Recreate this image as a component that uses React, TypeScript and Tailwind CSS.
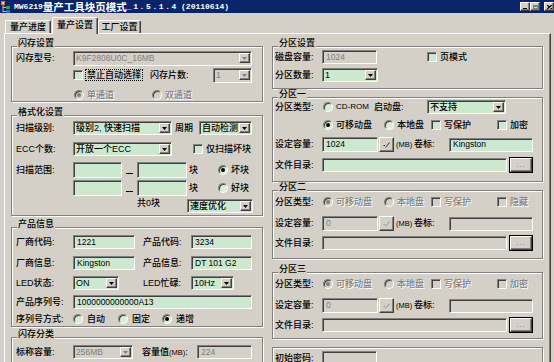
import React from "react";

const sunken =
  "border border-t-[#808080] border-l-[#808080] border-r-white border-b-white shadow-[inset_1px_1px_0_#404040]";
const raised =
  "border border-t-white border-l-white border-r-[#404040] border-b-[#404040] shadow-[inset_-1px_-1px_0_#808080]";
const dis = "text-[#808080] [text-shadow:1px_1px_0_#fff]";

function Field({ className = "", value = "", disabled = false }: { className?: string; value?: string; disabled?: boolean }) {
  return (
    <div
      className={`${className} shrink-0 box-border ${sunken} flex items-center pl-[3px] overflow-hidden whitespace-nowrap text-[8.5px] ${
        disabled ? "bg-[#d4d0c8] text-[#808080]" : "bg-[#cce8cf] text-black"
      }`}
    >
      {value}
    </div>
  );
}

function Arrow({ disabled = false }: { disabled?: boolean }) {
  return (
    <div className={`w-[11px] h-[10px] shrink-0 mr-[1px] box-border bg-[#d4d0c8] ${raised} flex items-center justify-center`}>
      <svg width="5" height="3" viewBox="0 0 5 3">
        <path d="M0 0h5L2.5 3z" fill={disabled ? "#808080" : "#000"} />
      </svg>
    </div>
  );
}

function Combo({ className = "", value = "", disabled = false }: { className?: string; value?: string; disabled?: boolean }) {
  return (
    <div
      className={`${className} shrink-0 box-border ${sunken} flex items-center justify-between overflow-hidden whitespace-nowrap ${
        disabled ? "bg-[#d4d0c8] text-[#808080]" : "bg-[#cce8cf] text-black"
      }`}
    >
      <span className={`pl-[2px] ${disabled ? "text-[8.5px]" : ""}`}>{value}</span>
      <Arrow disabled={disabled} />
    </div>
  );
}

function Check({ disabled = false }: { disabled?: boolean }) {
  return <span className={`block w-[10px] h-[10px] shrink-0 box-border ${sunken} ${disabled ? "bg-[#d4d0c8]" : "bg-[#cce8cf]"}`} />;
}

function Radio({ checked = false, disabled = false }: { checked?: boolean; disabled?: boolean }) {
  return (
    <span
      className={`w-[10px] h-[10px] shrink-0 box-border rounded-full ${sunken} flex items-center justify-center ${
        disabled ? "bg-[#d4d0c8]" : "bg-[#d8eed8]"
      }`}
    >
      {checked && <span className={`block w-[4px] h-[4px] rounded-full ${disabled ? "bg-[#808080]" : "bg-black"}`} />}
    </span>
  );
}

function Group({ title, className = "", children }: { title?: string; className?: string; children?: React.ReactNode }) {
  return (
    <div className={`relative shrink-0 box-border border border-[#808080] shadow-[inset_1px_1px_0_#fff,1px_1px_0_#fff] ${className}`}>
      {title && <span className="absolute -top-[9px] left-[5px] px-[1px] bg-[#d4d0c8] leading-[11px]">{title}</span>}
      {children}
    </div>
  );
}

function CheckBtn({ disabled = false }: { disabled?: boolean }) {
  return (
    <div className={`w-[15px] h-[15px] ml-[1px] shrink-0 box-border bg-[#d4d0c8] ${raised} flex items-center justify-center`}>
      <svg width="7" height="6" viewBox="0 0 7 6">
        <path d="M0.5 3.5L2 3.5M2.5 5.5L6.5 0.5" stroke={disabled ? "#909090" : "#303030"} strokeWidth="1" fill="none" />
      </svg>
    </div>
  );
}

function DotsBtn() {
  return (
    <div className="w-[24px] h-[16px] ml-[2px] shrink-0 box-border border border-black bg-[#d4d0c8]">
      <div className={`w-full h-full box-border ${raised} flex items-center justify-center text-[#808080] text-[8px] tracking-[1px]`}>...</div>
    </div>
  );
}

function Partition({ title, last, className, disabledAll }: { title: string; last: string; className: string; disabledAll: boolean }) {
  return (
    <Group title={title} className={className}>
      <div className="flex flex-col pl-[2px] pt-[4px]">
        <div className="h-[14px] flex items-center">
          <span className="w-[48px] shrink-0">分区类型:</span>
          <div className="w-[61px] flex items-center">
            <Radio checked disabled={disabledAll} />
            <span className={`ml-[3px] ${dis}`}>可移动盘</span>
          </div>
          <div className="w-[47px] flex items-center">
            <Radio disabled={disabledAll} />
            <span className={`ml-[3px] ${dis}`}>本地盘</span>
          </div>
          <div className="w-[66px] flex items-center">
            <Check disabled={disabledAll} />
            <span className={`ml-[3px] ${dis}`}>写保护</span>
          </div>
          <div className="flex items-center">
            <Check disabled={disabledAll} />
            <span className={`ml-[3px] ${dis}`}>{last}</span>
          </div>
        </div>
        <div className="h-[15px] mt-[7px] flex items-center">
          <span className="w-[47px] shrink-0">设定容量:</span>
          <Field className="w-[56px] h-[15px]" value="0" disabled />
          <CheckBtn disabled />
          <span className="w-[18px] ml-[2px] shrink-0 text-[7.5px]">(MB)</span>
          <span className="w-[35px] shrink-0">卷标:</span>
          <Field className="w-[84px] h-[14px]" disabled />
        </div>
        <div className="h-[16px] mt-[4px] flex items-center">
          <span className="w-[47px] shrink-0">文件目录:</span>
          <Field className="w-[185px] h-[14px]" disabled />
          <DotsBtn />
        </div>
      </div>
    </Group>
  );
}

export default function App() {
  return (
    <div className="w-[554px] h-[362px] overflow-hidden bg-[#d4d0c8] text-black text-[9px] leading-none font-medium font-['Liberation_Sans','Noto_Sans_CJK_SC',sans-serif]">
      {/* Title bar */}
      <div className="h-[13px] bg-[#0a246a] flex items-center text-white font-bold">
        <svg width="10" height="12" viewBox="0 0 10 12" className="ml-[1px] shrink-0">
          <rect x="0" y="0" width="4" height="4" fill="#e07020" />
          <rect x="1" y="1" width="2" height="2" fill="#ffd080" />
          <rect x="1.5" y="4" width="1" height="7" fill="#c0c0c0" />
          <rect x="2" y="6" width="4" height="1" fill="#c0c0c0" />
          <rect x="2" y="10" width="4" height="1" fill="#c0c0c0" />
          <rect x="5" y="5" width="4" height="3" fill="#30a050" />
          <rect x="5" y="9" width="4" height="3" fill="#3070c0" />
        </svg>
        <div className="ml-[3px] h-[13px] flex items-center whitespace-nowrap leading-[12px]">
          <span className="font-['Liberation_Mono',monospace] text-[8px]">MW6219</span>
          <span className="text-[10.5px] font-['Noto_Sans_CJK_SC',sans-serif]">量产工具块页模式</span>
          <span className="font-['Liberation_Mono',monospace] text-[8px] tracking-[1.6px]">_1.5.1.4</span>
          <span className="font-['Liberation_Mono',monospace] text-[8px] ml-[3px]">(20110614)</span>
        </div>
        <div className="flex-1" />
        <div className="flex items-center">
          <div className={`w-[10px] h-[9px] box-border bg-[#d4d0c8] ${raised} flex items-end justify-center pb-[1px]`}>
            <span className="block w-[4px] h-[1px] bg-black" />
          </div>
          <div className={`w-[10px] h-[9px] box-border bg-[#d4d0c8] ${raised} flex items-center justify-center`}>
            <span className="block w-[5px] h-[4px] border border-[#808080] border-t-2" />
          </div>
          <div className={`w-[10px] h-[9px] ml-[4px] box-border bg-[#d4d0c8] ${raised} flex items-center justify-center`}>
            <svg width="5" height="4" viewBox="0 0 5 4">
              <path d="M0 0L5 4M5 0L0 4" stroke="#000" strokeWidth="1.2" />
            </svg>
          </div>
        </div>
      </div>

      {/* Tabs */}
      <div className="h-[20px] flex items-end pl-[5px]">
        <div className="w-[46px] h-[13px] box-border border-t border-l border-white border-r border-r-[#404040] shadow-[inset_-1px_0_0_#808080] rounded-t-[2px] flex items-center justify-center">
          量产进度
        </div>
        <div className="relative z-10 -mb-[1px] ml-[1px] w-[46px] h-[17px] box-border bg-[#d4d0c8] border-t border-l border-white border-r border-r-[#404040] shadow-[inset_-1px_0_0_#808080] rounded-t-[2px] flex items-start justify-center pt-[3px]">
          量产设置
        </div>
        <div className="w-[43px] h-[13px] box-border border-t border-l border-white border-r border-r-[#404040] shadow-[inset_-1px_0_0_#808080] rounded-t-[2px] flex items-center justify-center">
          工厂设置
        </div>
      </div>

      {/* Panel */}
      <div className="ml-[4px] w-[547px] h-[340px] box-border border-t border-l border-white border-r border-r-[#404040] shadow-[inset_-1px_0_0_#808080] flex gap-[9px] pl-[6px] pt-[12px]">
        {/* Left column */}
        <div className="w-[252px] shrink-0 flex flex-col">
          <Group title="闪存设置" className="h-[56px]">
            <div className="flex flex-col pl-[4px] pt-[3px]">
              <div className="h-[16px] flex items-center">
                <span className="w-[57px] shrink-0">闪存型号:</span>
                <Combo className="w-[179px] h-[15px]" value="K9F2808U0C_16MB" disabled />
              </div>
              <div className="h-[16px] mt-[1px] flex items-center">
                <span className="w-[57px] shrink-0" />
                <Check />
                <span className="ml-[2px] w-[58px] h-[12px] box-border border border-dotted border-black flex items-center justify-center shrink-0">
                  禁止自动选择
                </span>
                <span className="ml-[7px] w-[63px] shrink-0">闪存片数:</span>
                <Combo className="w-[39px] h-[15px]" value="1" disabled />
              </div>
              <div className="h-[16px] mt-[4px] flex items-center">
                <span className="w-[58px] shrink-0" />
                <div className="w-[78px] flex items-center">
                  <Radio checked disabled />
                  <span className={`ml-[3px] ${dis}`}>单通道</span>
                </div>
                <div className="flex items-center">
                  <Radio disabled />
                  <span className={`ml-[3px] ${dis}`}>双通道</span>
                </div>
              </div>
            </div>
          </Group>

          <Group title="格式化设置" className="h-[101px] mt-[13px]">
            <div className="flex flex-col pl-[4px] pt-[5px]">
              <div className="h-[14px] flex items-center">
                <span className="w-[57px] shrink-0">扫描级别:</span>
                <Combo className="w-[99px] h-[14px]" value="级别2, 快速扫描" />
                <span className="ml-[3px] w-[24px] shrink-0">周期</span>
                <Combo className="w-[53px] h-[14px]" value="自动检测" />
              </div>
              <div className="h-[14px] mt-[7px] flex items-center">
                <span className="w-[57px] shrink-0">ECC个数:</span>
                <Combo className="w-[99px] h-[14px]" value="开放一个ECC" />
                <span className="ml-[21px]">
                  <Check />
                </span>
                <span className="ml-[3px]">仅扫描坏块</span>
              </div>
              <div className="h-[16px] mt-[6px] flex items-center">
                <span className="w-[57px] shrink-0">扫描范围:</span>
                <Field className="w-[49px] h-[16px]" />
                <span className="w-[15px] h-[16px] shrink-0 flex justify-center items-end pb-[4px]">
                  <span className="block w-[7px] h-[1px] bg-black" />
                </span>
                <Field className="w-[50px] h-[16px]" />
                <span className="ml-[2px] w-[29px] shrink-0">块</span>
                <Radio checked />
                <span className="ml-[3px]">坏块</span>
              </div>
              <div className="h-[16px] mt-[2px] flex items-center">
                <span className="w-[57px] shrink-0" />
                <Field className="w-[49px] h-[16px]" />
                <span className="w-[15px] h-[16px] shrink-0 flex justify-center items-end pb-[4px]">
                  <span className="block w-[7px] h-[1px] bg-black" />
                </span>
                <Field className="w-[50px] h-[16px]" />
                <span className="ml-[2px] w-[29px] shrink-0">块</span>
                <Radio />
                <span className="ml-[3px]">好块</span>
              </div>
              <div className="h-[14px] mt-[3px] flex items-center">
                <span className="w-[121px] shrink-0" />
                <span className="w-[50px] shrink-0 self-start">共0块</span>
                <Combo className="w-[66px] h-[14px]" value="速度优化" />
              </div>
            </div>
          </Group>

          <Group title="产品信息" className="h-[100px] mt-[11px]">
            <div className="flex flex-col pl-[4px] pt-[7px]">
              <div className="h-[14px] flex items-center">
                <span className="w-[57px] shrink-0">厂商代码:</span>
                <Field className="w-[62px] h-[14px]" value="1221" />
                <span className="ml-[8px] w-[48px] shrink-0">产品代码:</span>
                <Field className="w-[61px] h-[14px]" value="3234" />
              </div>
              <div className="h-[14px] mt-[7px] flex items-center">
                <span className="w-[57px] shrink-0">厂商信息:</span>
                <Field className="w-[62px] h-[14px]" value="Kingston" />
                <span className="ml-[8px] w-[48px] shrink-0">产品信息:</span>
                <Field className="w-[61px] h-[14px]" value="DT 101 G2" />
              </div>
              <div className="h-[14px] mt-[6px] flex items-center">
                <span className="w-[57px] shrink-0">LED状态:</span>
                <Combo className="w-[46px] h-[14px]" value="ON" />
                <span className="ml-[24px] w-[48px] shrink-0">LED忙碌:</span>
                <Combo className="w-[43px] h-[14px]" value="10Hz" />
              </div>
              <div className="h-[14px] mt-[5px] flex items-center">
                <span className="w-[57px] shrink-0">产品序列号:</span>
                <Field className="w-[179px] h-[14px]" value="1000000000000A13" />
              </div>
              <div className="h-[14px] mt-[3px] flex items-center">
                <span className="w-[57px] shrink-0">序列号方式:</span>
                <div className="w-[45px] flex items-center">
                  <Radio />
                  <span className="ml-[4px]">自动</span>
                </div>
                <div className="w-[44px] flex items-center">
                  <Radio />
                  <span className="ml-[4px]">固定</span>
                </div>
                <div className="flex items-center">
                  <Radio checked />
                  <span className="ml-[4px]">递增</span>
                </div>
              </div>
            </div>
          </Group>

          <Group title="闪存分类" className="h-[60px] mt-[10px]">
            <div className="flex flex-col pl-[4px] pt-[7px]">
              <div className="h-[14px] flex items-center">
                <span className="w-[57px] shrink-0">标称容量:</span>
                <Combo className="w-[60px] h-[14px]" value="256MB" disabled />
                <span className="ml-[9px] w-[55px] shrink-0">
                  容量值<span className="text-[7.5px]">(MB)</span>:
                </span>
                <Field className="w-[55px] h-[14px]" value="224" disabled />
              </div>
            </div>
          </Group>
        </div>

        {/* Right column */}
        <div className="w-[271px] shrink-0 flex flex-col">
          <Group title="分区设置" className="h-[43px]">
            <div className="flex flex-col pl-[2px] pt-[3px]">
              <div className="h-[14px] flex items-center">
                <span className="w-[47px] shrink-0">磁盘容量:</span>
                <Field className="w-[55px] h-[14px]" value="1024" disabled />
                <span className="ml-[50px]">
                  <Check />
                </span>
                <span className="ml-[3px]">页模式</span>
              </div>
              <div className="h-[14px] mt-[4px] flex items-center">
                <span className="w-[47px] shrink-0">分区数量:</span>
                <Combo className="w-[56px] h-[14px]" value="1" />
              </div>
            </div>
          </Group>

          <Group title="分区一" className="h-[85px] mt-[8px]">
            <div className="flex flex-col pl-[2px] pt-[2px]">
              <div className="h-[14px] flex items-center">
                <span className="w-[48px] shrink-0">分区类型:</span>
                <div className="w-[51px] flex items-center">
                  <Radio />
                  <span className="ml-[3px] text-[8px]">CD-ROM</span>
                </div>
                <span className="w-[53px] shrink-0">启动盘:</span>
                <Combo className="w-[79px] h-[14px]" value="不支持" />
              </div>
              <div className="h-[14px] mt-[4px] flex items-center">
                <span className="w-[48px] shrink-0" />
                <div className="w-[61px] flex items-center">
                  <Radio checked />
                  <span className="ml-[3px]">可移动盘</span>
                </div>
                <div className="w-[47px] flex items-center">
                  <Radio />
                  <span className="ml-[3px]">本地盘</span>
                </div>
                <div className="w-[66px] flex items-center">
                  <Check />
                  <span className="ml-[3px]">写保护</span>
                </div>
                <div className="flex items-center">
                  <Check />
                  <span className="ml-[3px]">加密</span>
                </div>
              </div>
              <div className="h-[15px] mt-[5px] flex items-center">
                <span className="w-[47px] shrink-0">设定容量:</span>
                <Field className="w-[56px] h-[15px]" value="1024" />
                <CheckBtn />
                <span className="w-[18px] ml-[2px] shrink-0 text-[7.5px]">(MB)</span>
                <span className="w-[35px] shrink-0">卷标:</span>
                <Field className="w-[84px] h-[14px]" value="Kingston" />
              </div>
              <div className="h-[16px] mt-[5px] flex items-center">
                <span className="w-[47px] shrink-0">文件目录:</span>
                <Field className="w-[185px] h-[14px]" />
                <DotsBtn />
              </div>
            </div>
          </Group>

          <Partition title="分区二" last="隐藏" className="h-[69px] mt-[8px]" disabledAll />
          <Partition title="分区三" last="加密" className="h-[67px] mt-[13px]" disabledAll />

          <Group className="h-[40px] mt-[8px]">
            <div className="flex flex-col pl-[2px] pt-[3px]">
              <div className="h-[14px] flex items-center">
                <span className="w-[47px] shrink-0">初始密码:</span>
                <Field className="w-[55px] h-[14px]" disabled />
              </div>
            </div>
          </Group>
        </div>
      </div>
    </div>
  );
}
